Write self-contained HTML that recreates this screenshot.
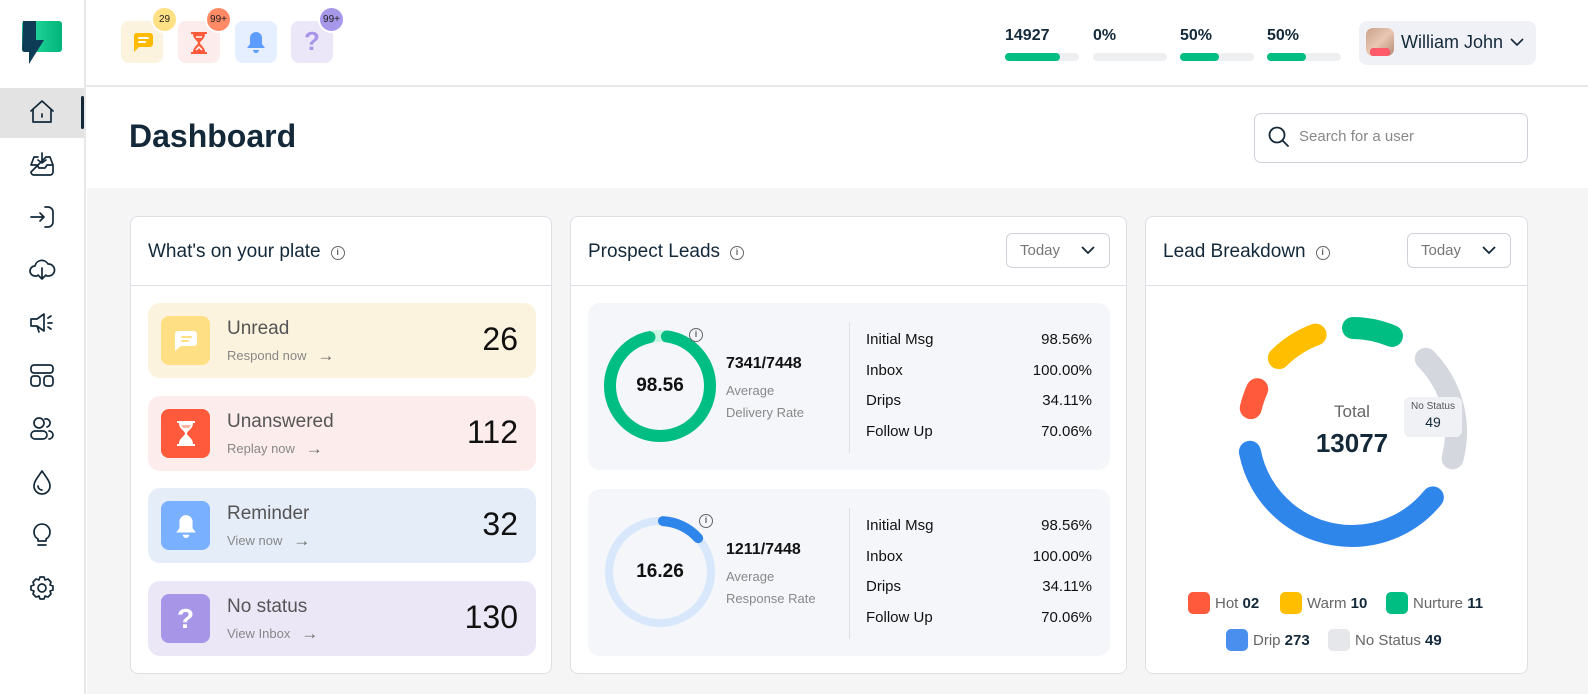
<!DOCTYPE html>
<html><head><meta charset="utf-8">
<style>
*{box-sizing:border-box;margin:0;padding:0}
body{width:1588px;height:694px;overflow:hidden;background:#fff;font-family:"Liberation Sans",sans-serif;color:#13293a;position:relative}
.a{position:absolute}
.side{left:0;top:0;width:86px;height:694px;border-right:2px solid #e8e8e8;background:#fff}
.topline{left:86px;top:85px;width:1502px;height:2px;background:#e8e8e8}
.grey{left:87px;top:188px;width:1501px;height:506px;background:#f5f5f6}
.card{background:#fff;border:1px solid #dcdfe4;border-radius:8px}
.ch{position:absolute;left:0;right:0;top:0;height:69px;border-bottom:1px solid #dcdfe4}
.ct{position:absolute;left:17px;top:24px;font-size:19px;color:#13293a}
.info{display:inline-block;width:14px;height:14px;border:1.5px solid #666;border-radius:50%;font-size:9px;text-align:center;line-height:11px;color:#666;vertical-align:2px;margin-left:10px;font-weight:bold}
.dd{position:absolute;width:104px;height:35px;border:1px solid #cfd3d9;border-radius:6px;font-size:15px;color:#777;padding:8px 0 0 13px}
.dd svg{position:absolute;right:14px;top:12px}
.item{position:absolute;left:17px;width:388px;height:75px;border-radius:12px}
.ic{position:absolute;left:13px;top:13px;width:49px;height:49px;border-radius:8px}
.it{position:absolute;left:79px;top:15px;font-size:19px;color:#555}
.is{position:absolute;left:79px;top:43px;font-size:13px;color:#888}
.is span{font-size:17px;color:#666;vertical-align:-1px}
.in{position:absolute;right:18px;top:18px;font-size:32px;color:#111}
.pbox{position:absolute;left:17px;width:522px;height:167px;background:#f4f6fa;border-radius:12px}
.row{position:absolute;left:278px;width:226px;font-size:15px;color:#111}
.row b{position:absolute;right:0;font-weight:normal}
.badge{position:absolute;border-radius:50%;font-size:10px;text-align:center;color:#222;border:2px solid #fff}
.nb{position:absolute;width:42px;height:42px;border-radius:8px;top:21px}
.bar{position:absolute;top:53px;width:74px;height:8px;border-radius:4px;background:#eeeff1}
.bar i{display:block;height:8px;border-radius:4px;background:#00bd82}
.bt{position:absolute;top:27px;font-size:16px;font-weight:bold;color:#13293a}
.lg{position:absolute;font-size:15px;color:#666}
.lg i{display:inline-block;width:22px;height:22px;border-radius:5px;vertical-align:-6px;margin-right:5px}
.lg b{color:#13293a}
</style></head><body>
<div class="a side"></div>
<div class="a topline"></div>
<div class="a grey"></div>

<svg class="a" style="left:20px;top:20px" width="44" height="46" viewBox="0 0 44 46">
<defs><linearGradient id="g1" x1="0" y1="0" x2="1" y2="0"><stop offset="0" stop-color="#2de3a4"/><stop offset="1" stop-color="#00b37a"/></linearGradient></defs>
<rect x="2" y="1" width="40" height="31" rx="3" fill="url(#g1)"/>
<path d="M3 1 H16 L16 20 L24 20 L9 44 L9 32 L5 32 Q2 32 2 29 Z" fill="#0e3b56"/>
</svg>

<div class="a" style="left:0;top:88px;width:84px;height:50px;background:#e3e3e3"></div>
<div class="a" style="left:81px;top:96px;width:3px;height:33px;background:#13293a;border-radius:2px"></div>
<svg class="a" style="left:28px;top:98px" width="28" height="520" viewBox="0 0 28 520" fill="none" stroke="#13293a" stroke-width="1.7" stroke-linecap="round" stroke-linejoin="round">
<path d="M3 13 L14 3 L25 13 M5 11 V24 H23 V11 M14 16 V19"/>
<g transform="translate(0,53)"><path d="M3 14 L6 6 H10 M18 6 H22 L25 14 V21 A3 3 0 0 1 22 24 H6 A3 3 0 0 1 3 21 Z M3 14 H9 L11 17 H17 L19 14 H25 M14 2 V12 M10 9 L14 12 L18 9"/></g>
<g transform="translate(0,106)"><path d="M3 13 H16 M12 9 L16 13 L12 17 M17 3 H20 A5 5 0 0 1 25 8 V18 A5 5 0 0 1 20 23 H17"/></g>
<g transform="translate(0,158)"><path d="M9 20 H7 A5 5 0 0 1 7 10 A7 7 0 0 1 20 8 A6 6 0 0 1 21 20 H19 M14 12 V23 M10 19 L14 23 L18 19"/></g>
<g transform="translate(0,211)"><path d="M3 10 H9 L16 5 V22 L9 17 H3 Z M9 17 L11 23 M20 9 L23 7 M20 14 H24 M20 18 L23 20"/></g>
<g transform="translate(0,264)"><rect x="3" y="3" width="22" height="8" rx="3"/><rect x="3" y="14" width="9" height="10" rx="3"/><rect x="16" y="14" width="9" height="10" rx="3"/></g>
<g transform="translate(0,317)"><circle cx="11" cy="8" r="5"/><rect x="3" y="16" width="16" height="8" rx="4"/><path d="M17 4 A4 4 0 0 1 19 12 M21 16 A4 4 0 0 1 21 24"/></g>
<g transform="translate(0,370)"><path d="M14 3 C9 10 6 14 6 18 A8 8 0 0 0 22 18 C22 14 19 10 14 3 Z M10 18 A4 4 0 0 0 14 22"/></g>
<g transform="translate(0,423)"><path d="M10 18 A8 8 0 1 1 18 18 V20 H10 Z M10 24 H18"/></g>
<g transform="translate(0,476)"><circle cx="14" cy="14" r="4"/><path d="M12 3 H16 L17 6 L20 5 L23 8 L22 11 L25 12 V16 L22 17 L23 20 L20 23 L17 22 L16 25 H12 L11 22 L8 23 L5 20 L6 17 L3 16 V12 L6 11 L5 8 L8 5 L11 6 Z"/></g>
</svg>

<div class="nb" style="left:121px;top:21px;background:#fcf3de"></div>
<svg class="a" style="left:132px;top:31px" width="22" height="22" viewBox="0 0 22 22"><path d="M4 2 H18 A3 3 0 0 1 21 5 V13 A3 3 0 0 1 18 16 H7 L2 21 V5 A3 3 0 0 1 4 2Z" fill="#ffbb00"/><path d="M7 7 H16 M7 11 H13" stroke="#fff" stroke-width="2" stroke-linecap="round"/></svg>
<div class="nb" style="left:178px;top:21px;background:#fdecec"></div>
<svg class="a" style="left:190px;top:32px" width="18" height="22" viewBox="0 0 18 22"><path d="M1 1 H17 M1 21 H17" stroke="#ff5a3c" stroke-width="2"/><path d="M3 2 H15 C15 7 10 9 10 11 C10 13 15 15 15 20 H3 C3 15 8 13 8 11 C8 9 3 7 3 2Z" fill="#ff5a3c"/><path d="M6 5 H12 M6 18 L9 15 L12 18" stroke="#fff" stroke-width="1.5" fill="none"/></svg>
<div class="nb" style="left:235px;top:21px;background:#e5efff"></div>
<svg class="a" style="left:246px;top:31px" width="20" height="22" viewBox="0 0 20 22"><path d="M10 1 A6 6 0 0 1 16 7 V13 L19 17 H1 L4 13 V7 A6 6 0 0 1 10 1Z M7 19 H13 A3 3 0 0 1 7 19Z" fill="#5c9dff"/></svg>
<div class="nb" style="left:291px;top:21px;background:#ebe7f8"></div>
<div class="a" style="left:304px;top:26px;font-size:26px;font-weight:bold;color:#a895ea">?</div>
<div class="badge" style="left:151px;top:6px;width:27px;height:27px;background:#ffe084;line-height:23px">29</div>
<div class="badge" style="left:205px;top:6px;width:27px;height:27px;background:#ff8a65;line-height:23px">99+</div>
<div class="badge" style="left:318px;top:6px;width:27px;height:27px;background:#a798ea;line-height:23px">99+</div>

<div class="bt" style="left:1005px">14927</div><div class="bar" style="left:1005px"><i style="width:55px"></i></div>
<div class="bt" style="left:1093px">0%</div><div class="bar" style="left:1093px"></div>
<div class="bt" style="left:1180px">50%</div><div class="bar" style="left:1180px"><i style="width:39px"></i></div>
<div class="bt" style="left:1267px">50%</div><div class="bar" style="left:1267px"><i style="width:39px"></i></div>

<div class="a" style="left:1359px;top:21px;width:177px;height:44px;background:#f0f1f6;border-radius:8px"></div>
<div class="a" style="left:1366px;top:28px;width:28px;height:28px;border-radius:7px;background:linear-gradient(135deg,#caa187,#e8c7b4 50%,#b58a72)"></div>
<div class="a" style="left:1370px;top:48px;width:20px;height:8px;background:#ff5a6a;border-radius:3px"></div>
<div class="a" style="left:1401px;top:32px;font-size:18px;color:#13293a">William John</div>
<svg class="a" style="left:1510px;top:38px" width="14" height="9" viewBox="0 0 14 9"><path d="M1 1 L7 7 L13 1" stroke="#13293a" stroke-width="1.6" fill="none"/></svg>

<div class="a" style="left:129px;top:118px;font-size:32px;font-weight:bold;color:#13293a">Dashboard</div>
<div class="a" style="left:1254px;top:113px;width:274px;height:50px;border:1px solid #cfd3d9;border-radius:7px"></div>
<svg class="a" style="left:1268px;top:126px" width="22" height="22" viewBox="0 0 22 22"><circle cx="9" cy="9" r="7.5" stroke="#13293a" stroke-width="1.8" fill="none"/><path d="M14.5 14.5 L20 20" stroke="#13293a" stroke-width="1.8" stroke-linecap="round"/></svg>
<div class="a" style="left:1299px;top:128px;font-size:15px;color:#888">Search for a user</div>

<div class="a card" style="left:130px;top:216px;width:422px;height:458px">
<div class="ch"><div class="ct">What's on your plate<span class="info">i</span></div></div>
<div class="item" style="top:86px;background:#fcf3de"><div class="ic" style="background:#ffdf84"></div>
<svg class="a" style="left:26px;top:27px" width="24" height="22" viewBox="0 0 24 22"><path d="M4 1 H20 A3 3 0 0 1 23 4 V13 A3 3 0 0 1 20 16 H7 L1 21 V4 A3 3 0 0 1 4 1Z" fill="#fff"/><path d="M8 7 H17 M8 11 H14" stroke="#ffdf84" stroke-width="2" stroke-linecap="round"/></svg>
<div class="it">Unread</div><div class="is">Respond now &nbsp;&nbsp;<span>→</span></div><div class="in">26</div></div>
<div class="item" style="top:179px;background:#fdecec"><div class="ic" style="background:#ff5a3c"></div>
<svg class="a" style="left:28px;top:25px" width="20" height="25" viewBox="0 0 20 25"><path d="M1 1 H19 M1 24 H19" stroke="#fff" stroke-width="2"/><path d="M3 2 H17 C17 8 11 10 11 12.5 C11 15 17 17 17 23 H3 C3 17 9 15 9 12.5 C9 10 3 8 3 2Z" fill="#fff"/><path d="M5 4 H15 L13 7 H7Z" fill="#ffb3a3"/></svg>
<div class="it">Unanswered</div><div class="is">Replay now &nbsp;&nbsp;<span>→</span></div><div class="in">112</div></div>
<div class="item" style="top:271px;background:#e5edf8"><div class="ic" style="background:#79b0ff"></div>
<svg class="a" style="left:27px;top:26px" width="22" height="24" viewBox="0 0 20 22"><path d="M10 1 A6 6 0 0 1 16 7 V13 L19 17 H1 L4 13 V7 A6 6 0 0 1 10 1Z M7 19 H13 A3 3 0 0 1 7 19Z" fill="#fff"/></svg>
<div class="it">Reminder</div><div class="is">View now &nbsp;&nbsp;<span>→</span></div><div class="in">32</div></div>
<div class="item" style="top:364px;background:#ebe7f6"><div class="ic" style="background:#a795e8"></div>
<div class="a" style="left:29px;top:22px;font-size:28px;font-weight:bold;color:#fff">?</div>
<div class="it">No status</div><div class="is">View Inbox &nbsp;&nbsp;<span>→</span></div><div class="in">130</div></div>
</div>

<div class="a card" style="left:570px;top:216px;width:557px;height:458px">
<div class="ch"><div class="ct">Prospect Leads<span class="info">i</span></div>
<div class="dd" style="left:435px;top:16px">Today<svg width="14" height="9" viewBox="0 0 14 9"><path d="M1 1 L7 7 L13 1" stroke="#13293a" stroke-width="1.8" fill="none"/></svg></div></div>
<div class="pbox" style="top:86px">
<svg class="a" style="left:0;top:0" width="140" height="167"><circle cx="72" cy="83" r="50" fill="none" stroke="#c8f5e4" stroke-width="12"/><circle cx="72" cy="83" r="50" fill="none" stroke="#00bd82" stroke-width="12" stroke-linecap="round" stroke-dasharray="296 400" stroke-dashoffset="-7" transform="rotate(-90 72 83)"/></svg>
<div class="a" style="left:0;width:144px;top:72px;text-align:center;font-size:19px;font-weight:bold;color:#111">98.56</div>
<span class="info a" style="left:101px;top:25px;margin:0">i</span>
<div class="a" style="left:138px;top:52px;font-size:16px;font-weight:bold;color:#111">7341/7448</div>
<div class="a" style="left:138px;top:77px;font-size:13px;color:#888;line-height:22px">Average<br>Delivery Rate</div>
<div class="a" style="left:261px;top:19px;width:1px;height:131px;background:#dcdfe4"></div>
<div class="row" style="top:28px">Initial Msg<b>98.56%</b></div>
<div class="row" style="top:59px">Inbox<b>100.00%</b></div>
<div class="row" style="top:89px">Drips<b>34.11%</b></div>
<div class="row" style="top:120px">Follow Up<b>70.06%</b></div>
</div>
<div class="pbox" style="top:272px">
<svg class="a" style="left:0;top:0" width="140" height="167"><circle cx="72" cy="83" r="51" fill="none" stroke="#d8e7fb" stroke-width="8"/><circle cx="72" cy="83" r="51" fill="none" stroke="#2f86ea" stroke-width="10" stroke-linecap="round" stroke-dasharray="40 400" stroke-dashoffset="-3" transform="rotate(-90 72 83)"/></svg>
<div class="a" style="left:0;width:144px;top:72px;text-align:center;font-size:19px;font-weight:bold;color:#111">16.26</div>
<span class="info a" style="left:111px;top:25px;margin:0">i</span>
<div class="a" style="left:138px;top:52px;font-size:16px;font-weight:bold;color:#111">1211/7448</div>
<div class="a" style="left:138px;top:77px;font-size:13px;color:#888;line-height:22px">Average<br>Response Rate</div>
<div class="a" style="left:261px;top:19px;width:1px;height:131px;background:#dcdfe4"></div>
<div class="row" style="top:28px">Initial Msg<b>98.56%</b></div>
<div class="row" style="top:59px">Inbox<b>100.00%</b></div>
<div class="row" style="top:89px">Drips<b>34.11%</b></div>
<div class="row" style="top:120px">Follow Up<b>70.06%</b></div>
</div>
</div>

<div class="a card" style="left:1145px;top:216px;width:383px;height:458px">
<div class="ch"><div class="ct">Lead Breakdown<span class="info">i</span></div>
<div class="dd" style="left:261px;top:16px">Today<svg width="14" height="9" viewBox="0 0 14 9"><path d="M1 1 L7 7 L13 1" stroke="#13293a" stroke-width="1.8" fill="none"/></svg></div></div>
</div>
<svg class="a" style="left:1222px;top:306px" width="260" height="260" viewBox="0 0 260 260">
<g transform="rotate(-90 130 126)" fill="none" stroke-width="22" stroke-linecap="round">
<circle cx="130" cy="126" r="104" stroke="#2f86ea" stroke-dasharray="236 700" stroke-dashoffset="-234"/>
<circle cx="130" cy="126" r="104" stroke="#ff5a3c" stroke-dasharray="20 700" stroke-dashoffset="-514"/>
<circle cx="130" cy="126" r="104" stroke="#ffbf00" stroke-dasharray="44 700" stroke-dashoffset="-572"/>
<circle cx="130" cy="126" r="104" stroke="#00bd82" stroke-dasharray="40 700" stroke-dashoffset="-1"/>
<circle cx="130" cy="126" r="104" stroke="#d4d7de" stroke-dasharray="108 700" stroke-dashoffset="-82"/>
</g></svg>
<div class="a" style="left:1272px;top:402px;width:160px;text-align:center;font-size:17px;color:#666">Total</div>
<div class="a" style="left:1272px;top:428px;width:160px;text-align:center;font-size:26px;font-weight:bold;color:#13293a">13077</div>
<div class="a" style="left:1404px;top:397px;width:58px;height:40px;background:#f0f1f5;border-radius:6px;text-align:center;font-size:10px;color:#555;padding-top:4px">No Status<br><span style="font-size:14px;color:#13293a;line-height:20px">49</span></div>
<div class="lg" style="left:1188px;top:592px"><i style="background:#ff5a3c"></i>Hot <b>02</b></div>
<div class="lg" style="left:1280px;top:592px"><i style="background:#ffbf00"></i>Warm <b>10</b></div>
<div class="lg" style="left:1386px;top:592px"><i style="background:#00bd82"></i>Nurture <b>11</b></div>
<div class="lg" style="left:1226px;top:629px"><i style="background:#4a8fed"></i>Drip <b>273</b></div>
<div class="lg" style="left:1328px;top:629px"><i style="background:#e6e7ea"></i>No Status <b>49</b></div>
</body></html>
